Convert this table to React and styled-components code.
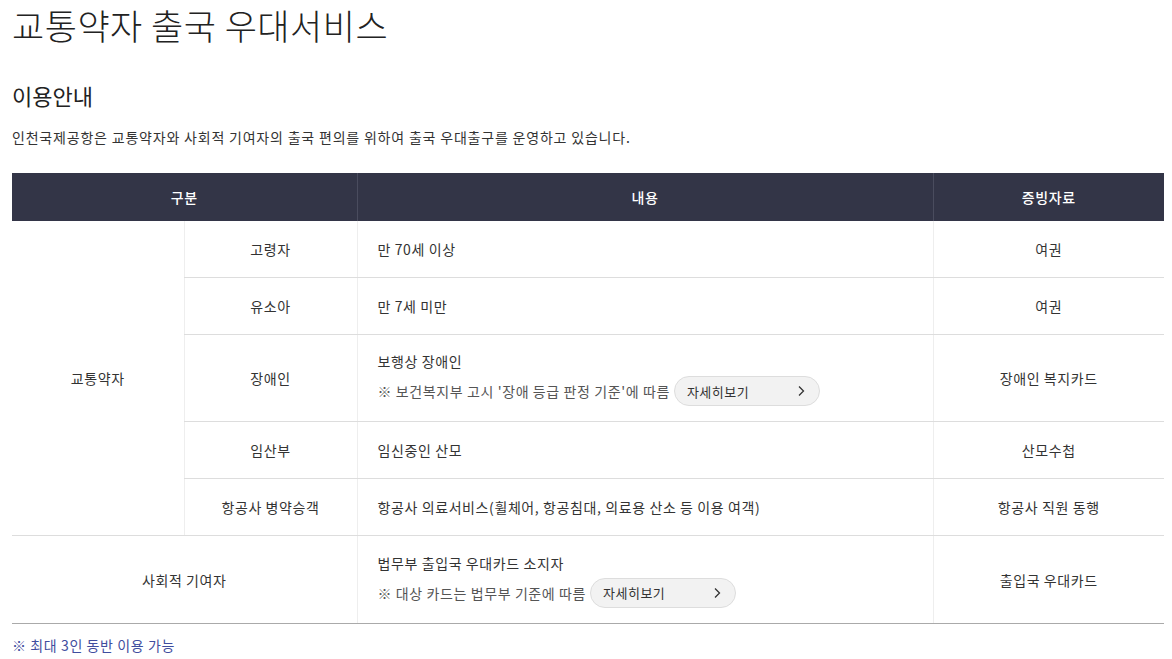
import React from "react";
import styled, { createGlobalStyle } from "styled-components";

const GlobalStyle = createGlobalStyle`
  body {
    margin: 0;
    background: #ffffff;
    font-family: "Noto Sans CJK KR", "Noto Sans", sans-serif;
    color: #333333;
  }
`;

const Page = styled.div`
  padding: 0 8px 0 12px;
  letter-spacing: 0.6px;
`;

const Title = styled.h1`
  margin: 0;
  padding-top: 2px;
  font-size: 35px;
  font-weight: 300;
  line-height: 46px;
  color: #222222;
  letter-spacing: 0.5px;
`;

const SubTitle = styled.h2`
  margin: 31px 0 0 0;
  font-size: 22px;
  font-weight: 400;
  line-height: 32px;
  color: #222222;
  letter-spacing: 0;
`;

const Intro = styled.p`
  margin: 15px 0 0 0;
  font-size: 14px;
  line-height: 22px;
  color: #333333;
  letter-spacing: 0.8px;
`;

const Table = styled.table`
  margin-top: 25px;
  width: 1152px;
  border-collapse: collapse;
  table-layout: fixed;
  font-size: 14px;
`;

const Th = styled.th`
  height: 48px;
  padding: 0;
  background: #333547;
  color: #ffffff;
  font-weight: 500;
  font-size: 14px;
  border-left: 1px solid #4a4c5e;
  &:first-child {
    border-left: none;
  }
`;

const Td = styled.td`
  height: ${(p) => p.$h || 56}px;
  padding: 0 ${(p) => (p.$left ? "20px" : "0")};
  text-align: ${(p) => (p.$left ? "left" : "center")};
  vertical-align: middle;
  color: #333333;
  border-left: ${(p) => (p.$noLeft ? "none" : "1px solid #eeeeee")};
  border-bottom: 1px solid ${(p) => (p.$last ? "#aaaaaa" : "#dddddd")};
`;

const Line = styled.div`
  display: flex;
  align-items: center;
  gap: 4px;
  line-height: 22px;
  & + & {
    margin-top: 4px;
  }
`;

const Note = styled.span`
  color: #555555;
`;

const MoreButton = styled.button`
  display: inline-flex;
  align-items: center;
  justify-content: space-between;
  width: 146px;
  height: 30px;
  padding: 0 14px 0 12px;
  border: 1px solid #dddddd;
  border-radius: 15px;
  background: #f2f2f2;
  font-family: inherit;
  font-size: 13px;
  font-weight: 400;
  letter-spacing: 0.5px;
  color: #333333;
  cursor: pointer;
`;

const Footnote = styled.p`
  margin: 11px 0 0 0;
  font-size: 14px;
  line-height: 20px;
  color: #3f4d9e;
`;

function Chevron() {
  return (
    <svg width="8" height="12" viewBox="0 0 8 12">
      <path d="M2 1.5 L6.5 6 L2 10.5" fill="none" stroke="#333" strokeWidth="1.3" />
    </svg>
  );
}

function More() {
  return (
    <MoreButton>
      <span>자세히보기</span>
      <Chevron />
    </MoreButton>
  );
}

export default function App() {
  return (
    <Page>
      <GlobalStyle />
      <Title>교통약자 출국 우대서비스</Title>
      <SubTitle>이용안내</SubTitle>
      <Intro>
        인천국제공항은 교통약자와 사회적 기여자의 출국 편의를 위하여 출국 우대출구를 운영하고 있습니다.
      </Intro>
      <Table>
        <colgroup>
          <col style={{ width: 172 }} />
          <col style={{ width: 173 }} />
          <col style={{ width: 576 }} />
          <col style={{ width: 231 }} />
        </colgroup>
        <thead>
          <tr>
            <Th colSpan={2}>구분</Th>
            <Th>내용</Th>
            <Th>증빙자료</Th>
          </tr>
        </thead>
        <tbody>
          <tr>
            <Td rowSpan={5} $noLeft>교통약자</Td>
            <Td>고령자</Td>
            <Td $left>만 70세 이상</Td>
            <Td>여권</Td>
          </tr>
          <tr>
            <Td>유소아</Td>
            <Td $left>만 7세 미만</Td>
            <Td>여권</Td>
          </tr>
          <tr>
            <Td $h={86}>장애인</Td>
            <Td $h={86} $left>
              <Line>보행상 장애인</Line>
              <Line>
                <Note>※ 보건복지부 고시 '장애 등급 판정 기준'에 따름</Note>
                <More />
              </Line>
            </Td>
            <Td $h={86}>장애인 복지카드</Td>
          </tr>
          <tr>
            <Td>임산부</Td>
            <Td $left>임신중인 산모</Td>
            <Td>산모수첩</Td>
          </tr>
          <tr>
            <Td>항공사 병약승객</Td>
            <Td $left>항공사 의료서비스(휠체어, 항공침대, 의료용 산소 등 이용 여객)</Td>
            <Td>항공사 직원 동행</Td>
          </tr>
          <tr>
            <Td colSpan={2} $h={87} $noLeft $last>사회적 기여자</Td>
            <Td $h={87} $left $last>
              <Line>법무부 출입국 우대카드 소지자</Line>
              <Line>
                <Note>※ 대상 카드는 법무부 기준에 따름</Note>
                <More />
              </Line>
            </Td>
            <Td $h={87} $last>출입국 우대카드</Td>
          </tr>
        </tbody>
      </Table>
      <Footnote>※ 최대 3인 동반 이용 가능</Footnote>
    </Page>
  );
}
